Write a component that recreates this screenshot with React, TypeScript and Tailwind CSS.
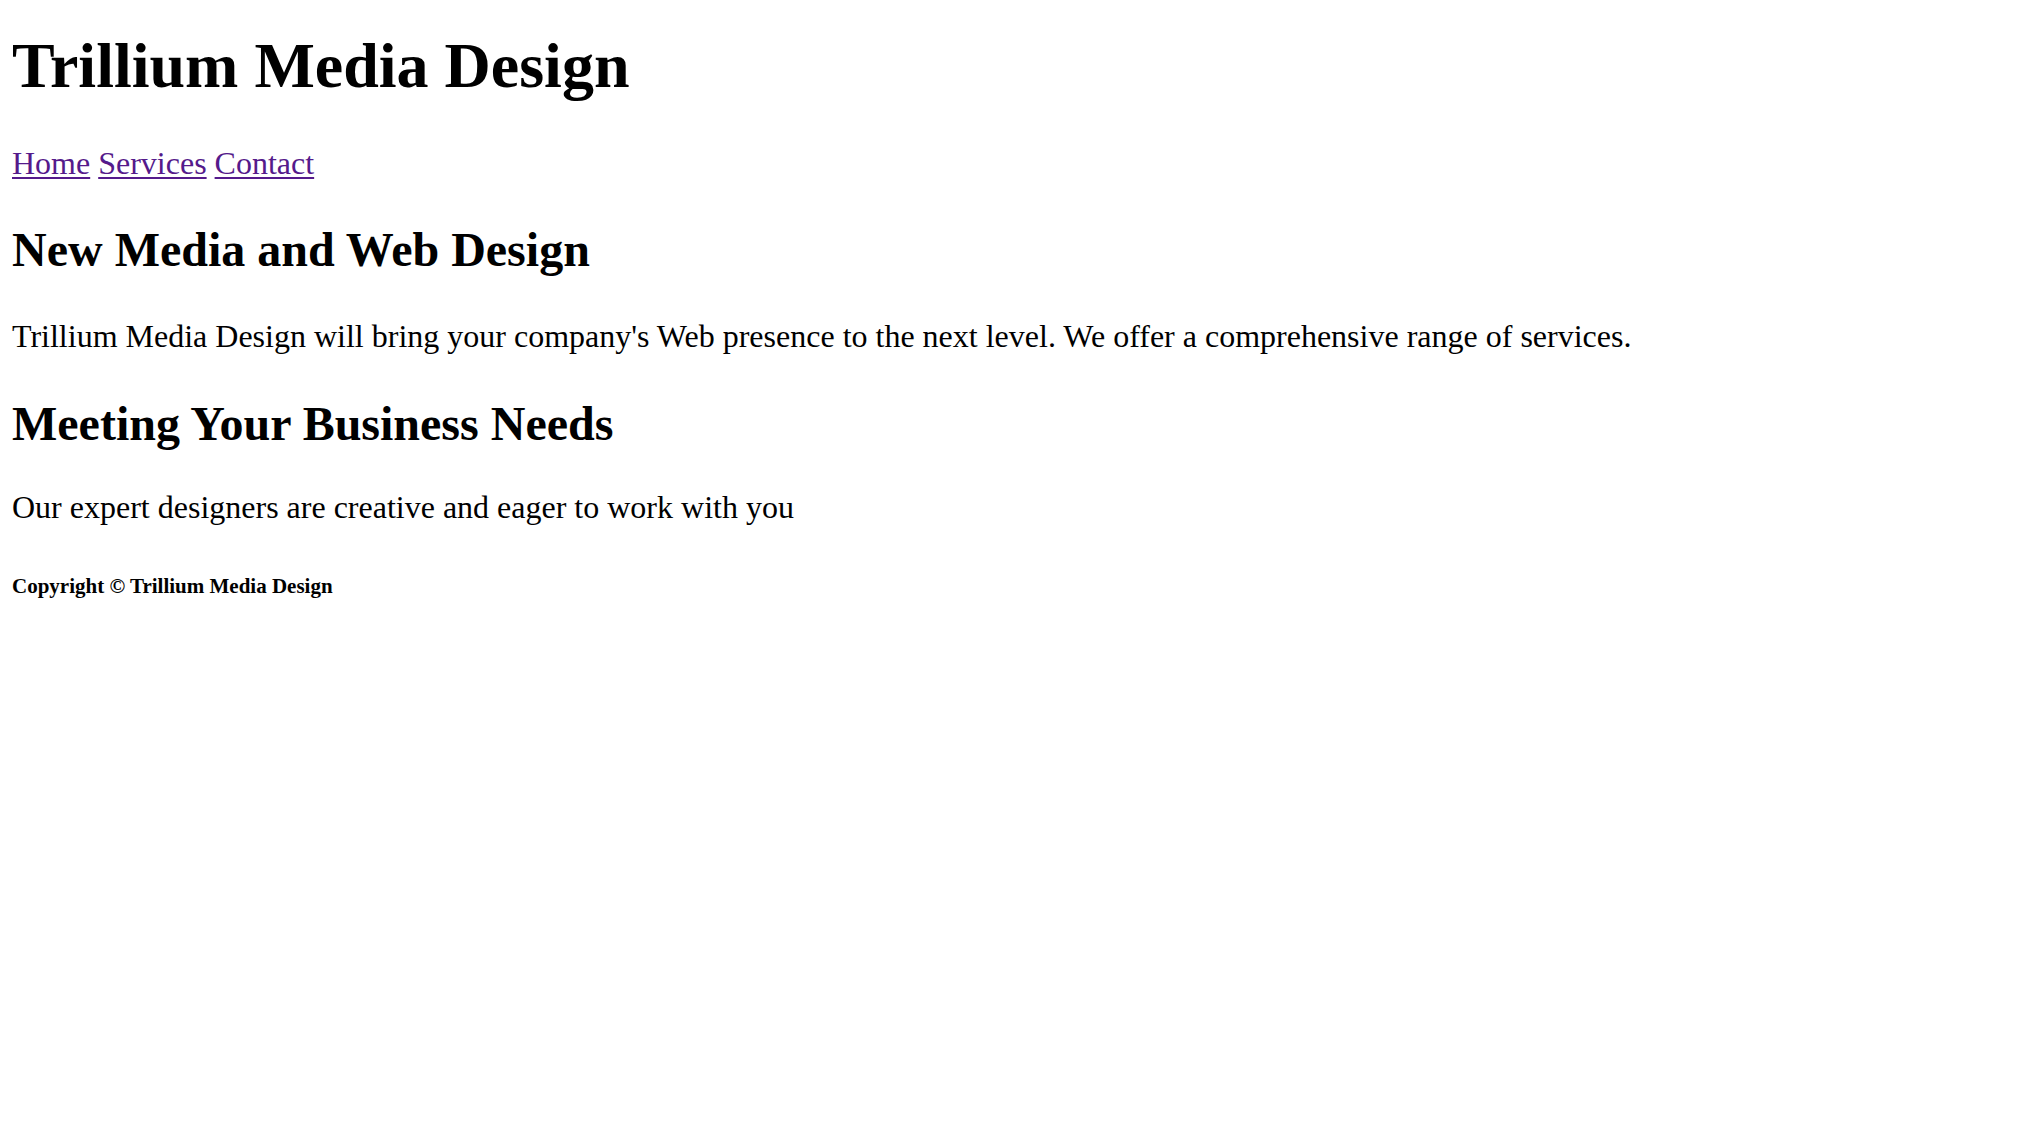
import React from 'react';

const links = ['Home', 'Services', 'Contact'];

const App: React.FC = () => {
  return (
    <div className="min-h-screen bg-white px-[12px] text-black font-['Liberation_Serif','Times_New_Roman',serif]">
      <header>
        <h1 className="pt-[34px] text-[64px] font-bold leading-none">Trillium Media Design</h1>
        <nav className="mt-[49px] text-[32px] leading-none">
          {links.map((l, i) => (
            <React.Fragment key={l}>
              <a href="#" className="text-[#551a8b] underline underline-offset-[3px] decoration-[2px]">
                {l}
              </a>
              {i < links.length - 1 ? ' ' : ''}
            </React.Fragment>
          ))}
        </nav>
      </header>

      <main>
        <h2 className="mt-[47px] text-[48px] font-bold leading-none">New Media and Web Design</h2>
        <p className="mt-[46px] text-[32px] leading-none">
          Trillium Media Design will bring your company's Web presence to the next level. We offer a comprehensive range of services.
        </p>

        <h2 className="mt-[48px] text-[48px] font-bold leading-none">Meeting Your Business Needs</h2>
        <p className="mt-[43px] text-[32px] leading-none">Our expert designers are creative and eager to work with you</p>
      </main>

      <footer className="mt-[53px] text-[21px] font-bold leading-none">Copyright © Trillium Media Design</footer>
    </div>
  );
};

export default App;
